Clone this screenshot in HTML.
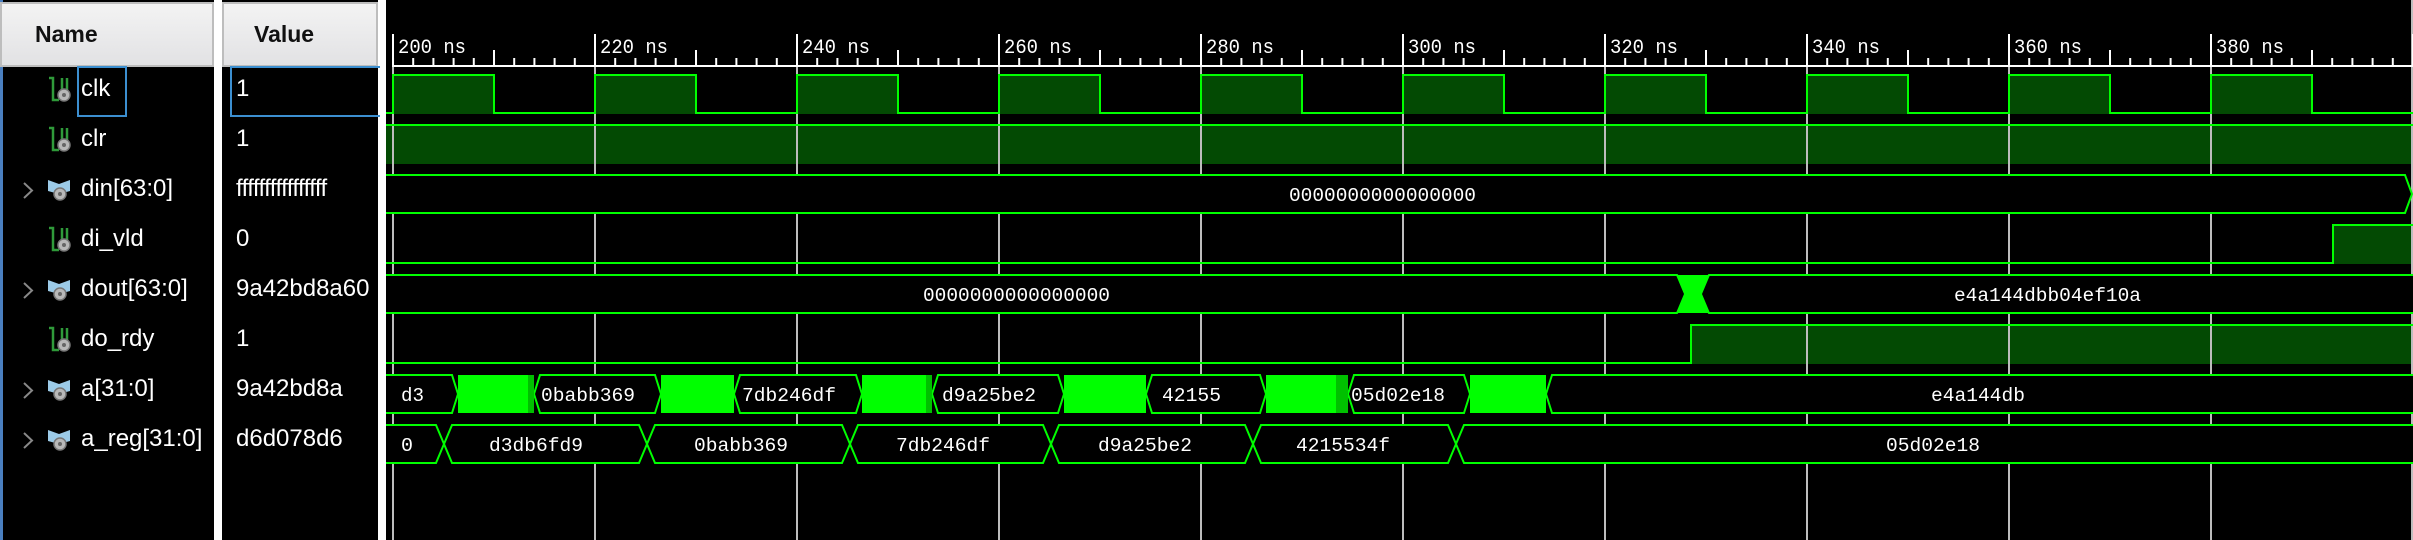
<!DOCTYPE html>
<html><head><meta charset="utf-8"><style>
html,body{margin:0;padding:0;width:2413px;height:540px;overflow:hidden;background:#000}
.p{position:absolute;font-family:"Liberation Sans",sans-serif}
.hdr{position:absolute;top:2px;height:61px;background:linear-gradient(#f3f3f3,#e2e2e4);border:2px solid #bdbdbd;font-weight:bold;font-size:23px;color:#111;line-height:61px;font-family:"Liberation Sans",sans-serif}
.t{position:absolute;color:#fff;font-size:24px;line-height:30px;font-family:"Liberation Sans",sans-serif}
</style></head><body>
<div class="p" style="left:0;top:0;width:214px;height:540px;background:#000;border-left:3px solid #4a7fc0;box-sizing:border-box"></div>
<div class="p" style="left:214px;top:0;width:8px;height:540px;background:#fff"></div>
<div class="p" style="left:378px;top:0;width:8px;height:540px;background:#fff"></div>
<div class="hdr" style="left:0;width:210px"><span style="position:absolute;left:33px">Name</span></div>
<div class="hdr" style="left:222px;width:152px"><span style="position:absolute;left:30px">Value</span></div>
<div class="p" style="left:77px;top:66px;width:46px;height:47px;border:2px solid #3c8fd0"></div>
<div class="p" style="left:230px;top:66px;width:148px;height:47px;border:2px solid #3c8fd0;border-right:none"></div>

<svg class="p" style="left:0;top:0" width="214" height="540">
<defs>
<g id="sc"><path d="M49 78h4v22h6" fill="none" stroke="#2f9a3a" stroke-width="2.5"/><path d="M62 78v12M67 78v12" stroke="#2f9a3a" stroke-width="2.5"/><circle cx="64" cy="95" r="6" fill="#b8b8b8" stroke="#777" stroke-width="1.5"/><circle cx="64" cy="95" r="2" fill="#666"/></g>
<g id="bu"><path d="M48 180l11 4 11-4v11l-11 3-11-3z" fill="#9ccbe8"/><circle cx="60" cy="194" r="6" fill="#b8b8b8" stroke="#777" stroke-width="1.5"/><circle cx="60" cy="194" r="2" fill="#666"/><path d="M24 183l8 7.5-8 7.5" fill="none" stroke="#888" stroke-width="2"/></g>
</defs>
<use href="#sc"/><use href="#sc" y="50"/><use href="#bu"/><use href="#sc" y="150"/><use href="#bu" y="100"/><use href="#sc" y="250"/><use href="#bu" y="200"/><use href="#bu" y="250"/>
</svg>
<div class="t" style="left:81px;top:74px">clk</div>
<div class="t" style="left:81px;top:124px">clr</div>
<div class="t" style="left:81px;top:174px">din[63:0]</div>
<div class="t" style="left:81px;top:224px">di_vld</div>
<div class="t" style="left:81px;top:274px">dout[63:0]</div>
<div class="t" style="left:81px;top:324px">do_rdy</div>
<div class="t" style="left:81px;top:374px">a[31:0]</div>
<div class="t" style="left:81px;top:424px">a_reg[31:0]</div>
<div class="t" style="left:236px;top:74px">1</div>
<div class="t" style="left:236px;top:124px">1</div>
<div class="t" style="left:236px;top:174px;letter-spacing:-0.6px;font-variant-ligatures:none;font-feature-settings:'liga' 0">ffffffffffffffff</div>
<div class="t" style="left:236px;top:224px">0</div>
<div class="t" style="left:236px;top:274px">9a42bd8a60</div>
<div class="t" style="left:236px;top:324px">1</div>
<div class="t" style="left:236px;top:374px">9a42bd8a</div>
<div class="t" style="left:236px;top:424px">d6d078d6</div>

<svg class="p" style="left:0;top:0" width="2413" height="540" viewBox="0 0 2413 540">
<defs>
<pattern id="mi" patternUnits="userSpaceOnUse" x="392" y="0" width="20.2" height="540"><rect x="0" y="0" width="2" height="540" fill="#fff"/></pattern>
<pattern id="mj" patternUnits="userSpaceOnUse" x="392" y="0" width="202" height="540"><rect x="0" y="0" width="2" height="540" fill="#fff"/></pattern>
<pattern id="md" patternUnits="userSpaceOnUse" x="493" y="0" width="202" height="540"><rect x="0" y="0" width="2" height="540" fill="#fff"/></pattern>
<pattern id="gr" patternUnits="userSpaceOnUse" x="392" y="0" width="202" height="540"><rect x="0" y="0" width="2" height="540" fill="#bdbdbd"/></pattern>
</defs>
<rect x="386" y="0" width="2027" height="540" fill="#000"/>
<g fill="#034a03">
<rect x="393" y="75" width="101" height="39"/><rect x="595" y="75" width="101" height="39"/><rect x="797" y="75" width="101" height="39"/><rect x="999" y="75" width="101" height="39"/><rect x="1201" y="75" width="101" height="39"/><rect x="1403" y="75" width="101" height="39"/><rect x="1605" y="75" width="101" height="39"/><rect x="1807" y="75" width="101" height="39"/><rect x="2009" y="75" width="101" height="39"/><rect x="2211" y="75" width="101" height="39"/>
<rect x="386" y="125" width="2027" height="39"/>
<rect x="2333" y="225" width="80" height="39"/>
<rect x="1691" y="325" width="722" height="39"/>
</g>
<rect x="386" y="66" width="2027" height="474" fill="url(#gr)"/>
<rect x="2411" y="0" width="2" height="540" fill="#bdbdbd"/>
<rect x="392" y="58" width="2021" height="8" fill="url(#mi)"/>
<rect x="392" y="50" width="2021" height="16" fill="url(#md)"/>
<rect x="392" y="34" width="2021" height="32" fill="url(#mj)"/>
<rect x="392" y="65" width="2021" height="2" fill="#fff"/>
<g fill="#fff" font-family="Liberation Mono,monospace" font-size="20">
<text x="398" y="53" textLength="68" lengthAdjust="spacingAndGlyphs">200 ns</text>
<text x="600" y="53" textLength="68" lengthAdjust="spacingAndGlyphs">220 ns</text>
<text x="802" y="53" textLength="68" lengthAdjust="spacingAndGlyphs">240 ns</text>
<text x="1004" y="53" textLength="68" lengthAdjust="spacingAndGlyphs">260 ns</text>
<text x="1206" y="53" textLength="68" lengthAdjust="spacingAndGlyphs">280 ns</text>
<text x="1408" y="53" textLength="68" lengthAdjust="spacingAndGlyphs">300 ns</text>
<text x="1610" y="53" textLength="68" lengthAdjust="spacingAndGlyphs">320 ns</text>
<text x="1812" y="53" textLength="68" lengthAdjust="spacingAndGlyphs">340 ns</text>
<text x="2014" y="53" textLength="68" lengthAdjust="spacingAndGlyphs">360 ns</text>
<text x="2216" y="53" textLength="68" lengthAdjust="spacingAndGlyphs">380 ns</text>
</g>
<g fill="none" stroke="#00ff00" stroke-width="2">
<path d="M386 113H393V75H494V113H595V75H696V113H797V75H898V113H999V75H1100V113H1201V75H1302V113H1403V75H1504V113H1605V75H1706V113H1807V75H1908V113H2009V75H2110V113H2211V75H2312V113H2413"/>
<path d="M386 125H2413"/>
<path d="M386 263H2333V225H2413"/>
<path d="M386 363H1691V325H2413"/>
</g>
<g fill="#000" stroke="#00ff00" stroke-width="2">
<path d="M386 175H2405L2412 194L2405 213H386"/>
<path d="M386 275H1677L1693 294L1677 313H386"/>
<path d="M2413 275H1709L1693 294L1709 313H2413"/>
<path d="M386 375H452L458 394L452 413H386"/>
<path d="M534 394L540 375H655L661 394L655 413H540Z"/>
<path d="M734 394L740 375H856L862 394L856 413H740Z"/>
<path d="M932 394L938 375H1058L1064 394L1058 413H938Z"/>
<path d="M1146 394L1152 375H1260L1266 394L1260 413H1152Z"/>
<path d="M1348 394L1354 375H1464L1470 394L1464 413H1354Z"/>
<path d="M2413 375H1552L1546 394L1552 413H2413"/>
<path d="M386 425H436L444 444L436 463H386"/>
<path d="M444 444L452 425H639L647 444L639 463H452Z"/>
<path d="M647 444L655 425H842L850 444L842 463H655Z"/>
<path d="M850 444L858 425H1043L1051 444L1043 463H858Z"/>
<path d="M1051 444L1059 425H1245L1253 444L1245 463H1059Z"/>
<path d="M1253 444L1261 425H1448L1456 444L1448 463H1261Z"/>
<path d="M2413 425H1464L1456 444L1464 463H2413"/>
</g>
<g fill="#00ff00">
<path d="M1676 275H1710L1702 294L1710 313H1676L1684 294Z"/>
<rect x="458" y="375" width="70" height="38"/><rect x="528" y="375" width="6" height="38" fill="#00c000"/>
<rect x="661" y="375" width="73" height="38"/>
<rect x="862" y="375" width="66" height="38"/><rect x="926" y="375" width="6" height="38" fill="#00c000"/>
<rect x="1064" y="375" width="82" height="38"/>
<rect x="1266" y="375" width="70" height="38"/><rect x="1336" y="375" width="12" height="38" fill="#00c000"/>
<rect x="1470" y="375" width="76" height="38"/>
</g>
<g fill="#fff" font-family="Liberation Mono,monospace" font-size="19">
<text x="1289" y="201" textLength="187" lengthAdjust="spacingAndGlyphs">0000000000000000</text>
<text x="923" y="301" textLength="187" lengthAdjust="spacingAndGlyphs">0000000000000000</text>
<text x="1954" y="301" textLength="187" lengthAdjust="spacingAndGlyphs">e4a144dbb04ef10a</text>
<text x="401" y="401" textLength="23" lengthAdjust="spacingAndGlyphs">d3</text>
<text x="541" y="401" textLength="94" lengthAdjust="spacingAndGlyphs">0babb369</text>
<text x="742" y="401" textLength="94" lengthAdjust="spacingAndGlyphs">7db246df</text>
<text x="942" y="401" textLength="94" lengthAdjust="spacingAndGlyphs">d9a25be2</text>
<text x="1162" y="401" textLength="59" lengthAdjust="spacingAndGlyphs">42155</text>
<text x="1351" y="401" textLength="94" lengthAdjust="spacingAndGlyphs">05d02e18</text>
<text x="1931" y="401" textLength="94" lengthAdjust="spacingAndGlyphs">e4a144db</text>
<text x="401" y="451" textLength="12" lengthAdjust="spacingAndGlyphs">0</text>
<text x="489" y="451" textLength="94" lengthAdjust="spacingAndGlyphs">d3db6fd9</text>
<text x="694" y="451" textLength="94" lengthAdjust="spacingAndGlyphs">0babb369</text>
<text x="896" y="451" textLength="94" lengthAdjust="spacingAndGlyphs">7db246df</text>
<text x="1098" y="451" textLength="94" lengthAdjust="spacingAndGlyphs">d9a25be2</text>
<text x="1296" y="451" textLength="94" lengthAdjust="spacingAndGlyphs">4215534f</text>
<text x="1886" y="451" textLength="94" lengthAdjust="spacingAndGlyphs">05d02e18</text>
</g>
</svg>
</body></html>
